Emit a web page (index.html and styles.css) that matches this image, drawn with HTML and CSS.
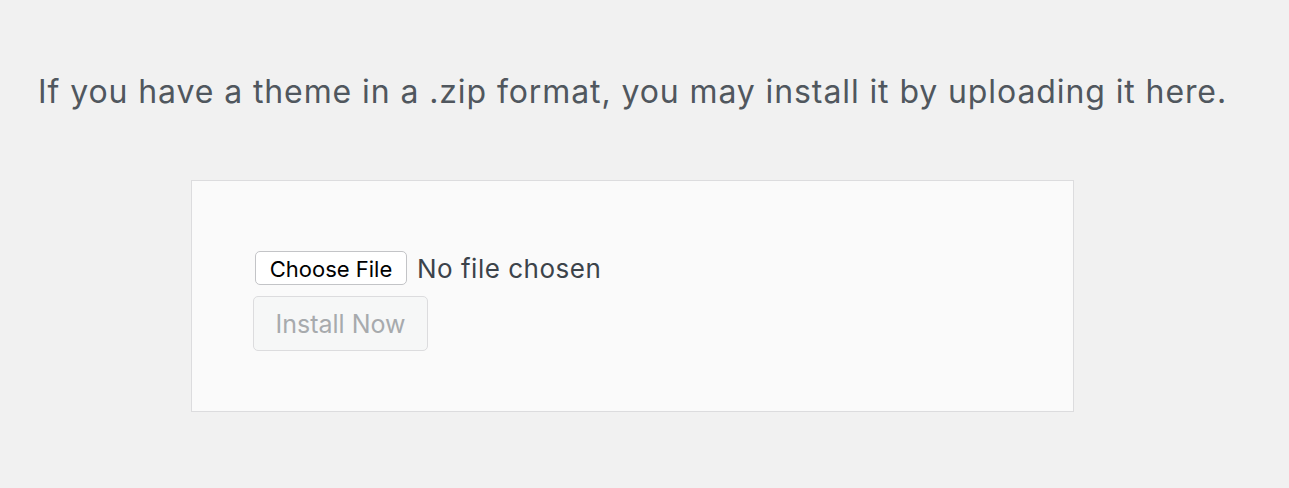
FILE: index.html
```html
<!DOCTYPE html>
<html>
<head>
<meta charset="utf-8">
<link rel="stylesheet" href="styles.css">
</head>
<body>
<div class="page">
  <p class="intro">If you have a theme in a .zip format, you may install it by uploading it here.</p>
  <div class="upload-box">
    <div class="file-row">
      <span class="choose-btn">Choose File</span>
      <span class="no-file">No file chosen</span>
    </div>
    <button class="install-btn" disabled>Install Now</button>
  </div>
</div>
</body>
</html>
```
FILE: styles.css
```css
html, body {
  margin: 0;
  padding: 0;
  background: #f1f1f1;
}
.page {
  padding: 70px 0 0 38px;
  font-family: Inter, "Liberation Sans", Arial, sans-serif;
}
.intro {
  margin: 0;
  font-size: 32px;
  letter-spacing: 0.9px;
  line-height: 44px;
  color: #50575e;
}
.upload-box {
  margin: 66px 0 0 153px;
  width: 883px;
  height: 232px;
  box-sizing: border-box;
  border: 1px solid #dcdcde;
  background: #fafafa;
  padding: 70px 0 0 61px;
}
.file-row {
  display: flex;
  align-items: center;
  gap: 10px;
  height: 34px;
  padding-left: 2px;
}
.choose-btn {
  box-sizing: border-box;
  width: 152px;
  height: 34px;
  border: 1px solid #c3c4c7;
  border-radius: 5px;
  background: #fff;
  font-size: 22px;
  color: #000;
  display: flex;
  align-items: center;
  justify-content: center;
  padding-top: 2px;
}
.no-file {
  font-size: 26px;
  letter-spacing: 0.5px;
  color: #3c434a;
}
.install-btn {
  margin-top: 11px;
  box-sizing: border-box;
  width: 175px;
  height: 55px;
  border: 1px solid #dcdcde;
  border-radius: 5px;
  background: #f6f7f7;
  color: #a7aaad;
  font-family: Inter, "Liberation Sans", Arial, sans-serif;
  font-size: 25px;
  padding: 0;
  display: block;
}
```
